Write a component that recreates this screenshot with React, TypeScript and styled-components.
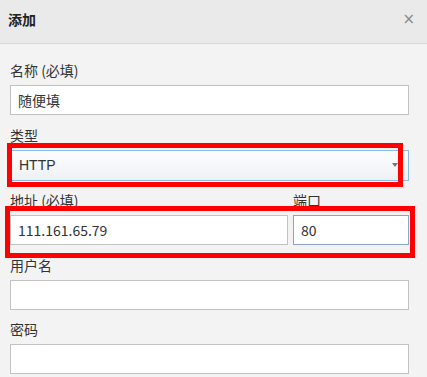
import styled, { createGlobalStyle } from "styled-components";

const GlobalStyle = createGlobalStyle`
  body {
    margin: 0;
    background: #f3f3f3;
    font-family: "Noto Sans CJK SC", "Noto Sans", sans-serif;
  }
`;

function App() {
  return (
    <>
      <GlobalStyle />
      <Dialog>
        <Header>
          <Title>添加</Title>
          <CloseButton>×</CloseButton>
        </Header>
        <Body>
          <Field>
            <Label>名称 (必填)</Label>
            <TextInput defaultValue="随便填" />
          </Field>
          <Field>
            <Label>类型</Label>
            <Select>
              <span>HTTP</span>
              <Caret />
            </Select>
          </Field>
          <Row>
            <Field>
              <Label>地址 (必填)</Label>
              <TextInput defaultValue="111.161.65.79" />
            </Field>
            <Field>
              <Label>端口</Label>
              <TextInput defaultValue="80" $focused />
            </Field>
          </Row>
          <Field>
            <Label>用户名</Label>
            <TextInput />
          </Field>
          <Field>
            <Label>密码</Label>
            <TextInput />
          </Field>
        </Body>
        {/* 스크린샷 위의 빨간 표시 */}
        <Mark $left={7} $top={143} $width={396} $height={44} />
        <Mark $left={5} $top={206} $width={410} $height={52} />
      </Dialog>
    </>
  );
}

const Dialog = styled.div`
  position: relative;
  width: 427px;
  height: 377px;
  overflow: hidden;
  background: #f3f3f3;
`;

const Header = styled.div`
  height: 44px;
  display: flex;
  justify-content: space-between;
  align-items: flex-start;
  padding: 9px 12px 0 8px;
  box-sizing: border-box;
  background: #eaeaea;
  border-bottom: 1px solid #d6d6d6;
`;

const Title = styled.span`
  font-size: 14px;
  line-height: 20px;
  font-weight: bold;
  color: #222;
`;

const CloseButton = styled.span`
  font-family: "DejaVu Sans", sans-serif;
  font-size: 15px;
  line-height: 20px;
  color: #8a8a8a;
`;

const Body = styled.div`
  padding: 16px 18px 0 10px;
  display: flex;
  flex-direction: column;
  gap: 9.5px;
`;

const Field = styled.div`
  display: flex;
  flex-direction: column;
  min-width: 0;
`;

const Row = styled.div`
  display: grid;
  grid-template-columns: 1fr 116px;
  column-gap: 5px;
`;

const Label = styled.label`
  font-size: 14px;
  line-height: 20px;
  color: #333;
  margin-bottom: 5px;
`;

const TextInput = styled.input<{ $focused?: boolean }>`
  box-sizing: border-box;
  width: 100%;
  height: 30px;
  margin: 0;
  padding: 0 7px;
  border: 1px solid ${(p) => (p.$focused ? "#8ea3c6" : "#c2c2c2")};
  background: #fff;
  font-family: "Noto Sans CJK SC", "Noto Sans", sans-serif;
  font-size: 14px;
  color: #333;
  outline: none;
`;

const Select = styled.div`
  box-sizing: border-box;
  height: 31px;
  display: flex;
  align-items: center;
  justify-content: space-between;
  padding: 0 10px 0 8px;
  border: 1px solid #8cbae6;
  background: linear-gradient(#fdfdfd, #eef1f4);
  font-family: "Liberation Sans", sans-serif;
  font-size: 14px;
  color: #333;
`;

const Caret = styled.span`
  width: 0;
  height: 0;
  border-left: 3.5px solid transparent;
  border-right: 3.5px solid transparent;
  border-top: 4px solid #777;
`;

const Mark = styled.div<{
  $left: number;
  $top: number;
  $width: number;
  $height: number;
}>`
  position: absolute;
  left: ${(p) => p.$left}px;
  top: ${(p) => p.$top}px;
  width: ${(p) => p.$width}px;
  height: ${(p) => p.$height}px;
  box-sizing: border-box;
  border: 5px solid #ff0000;
  pointer-events: none;
`;

export default App;
